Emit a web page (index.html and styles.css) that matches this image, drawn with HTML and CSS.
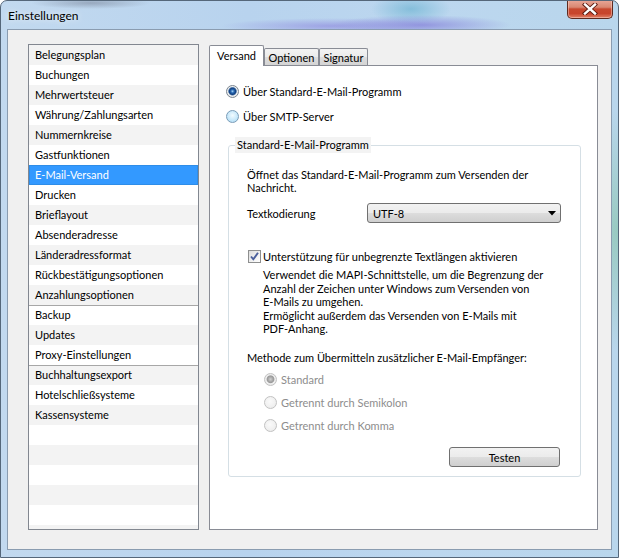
FILE: index.html
```html
<!DOCTYPE html>
<html lang="de">
<head>
<meta charset="utf-8">
<title>Einstellungen</title>
<link rel="stylesheet" href="styles.css">
</head>
<body>
<div class="window">
  <div class="titlebar">
    <span class="title">Einstellungen</span>
    <div class="close">
      <svg width="16" height="12" viewBox="0 0 16 12">
        <path d="M3 1.5 L13 10.5 M13 1.5 L3 10.5" stroke="#5a1a10" stroke-width="4.2" stroke-linecap="square" fill="none"/>
        <path d="M3 1.5 L13 10.5 M13 1.5 L3 10.5" stroke="#ffffff" stroke-width="2.4" stroke-linecap="square" fill="none"/>
      </svg>
    </div>
  </div>
  <div class="client">
    <ul class="list">
      <li>Belegungsplan</li>
      <li>Buchungen</li>
      <li>Mehrwertsteuer</li>
      <li>Währung/Zahlungsarten</li>
      <li>Nummernkreise</li>
      <li>Gastfunktionen</li>
      <li class="selected">E-Mail-Versand</li>
      <li>Drucken</li>
      <li>Brieflayout</li>
      <li>Absenderadresse</li>
      <li>Länderadressformat</li>
      <li>Rückbestätigungsoptionen</li>
      <li>Anzahlungsoptionen</li>
      <li class="sep">Backup</li>
      <li>Updates</li>
      <li>Proxy-Einstellungen</li>
      <li class="sep">Buchhaltungsexport</li>
      <li>Hotelschließsysteme</li>
      <li>Kassensysteme</li>
      <li></li>
      <li></li>
      <li></li>
      <li></li>
      <li></li>
      <li></li>
    </ul>
    <div class="tabarea">
      <div class="tabs">
        <div class="tab active tab-versand">Versand</div>
        <div class="tab tab-optionen">Optionen</div>
        <div class="tab tab-signatur">Signatur</div>
      </div>
      <div class="panel">
        <div class="option first">
          <span class="radio checked"></span>
          <span>Über Standard-E-Mail-Programm</span>
        </div>
        <div class="option second">
          <span class="radio hover"></span>
          <span>Über SMTP-Server</span>
        </div>
        <div class="group">
          <span class="group-label">Standard-E-Mail-Programm</span>
          <p class="desc1">Öffnet das Standard-E-Mail-Programm zum Versenden der<br>Nachricht.</p>
          <div class="field">
            <span class="field-label">Textkodierung</span>
            <div class="combo">
              <span>UTF-8</span>
              <svg width="8" height="5" viewBox="0 0 8 5"><path d="M0 0 H8 L4 4.5 Z" fill="#000"/></svg>
            </div>
          </div>
          <div class="check-row">
            <span class="checkbox">
              <svg width="11" height="11" viewBox="0 0 11 11"><path d="M2 5.5 L4.3 8.3 L9 1.8" stroke="#4a5f9c" stroke-width="1.9" fill="none"/></svg>
            </span>
            <span>Unterstützung für unbegrenzte Textlängen aktivieren</span>
          </div>
          <p class="desc2">Verwendet die MAPI-Schnittstelle, um die Begrenzung der<br>Anzahl der Zeichen unter Windows zum Versenden von<br>E-Mails zu umgehen.<br>Ermöglicht außerdem das Versenden von E-Mails mit<br>PDF-Anhang.</p>
          <p class="methode">Methode zum Übermitteln zusätzlicher E-Mail-Empfänger:</p>
          <div class="dis-option">
            <span class="radio disabled checked-dis"></span>
            <span>Standard</span>
          </div>
          <div class="dis-option">
            <span class="radio disabled"></span>
            <span>Getrennt durch Semikolon</span>
          </div>
          <div class="dis-option">
            <span class="radio disabled"></span>
            <span>Getrennt durch Komma</span>
          </div>
          <div class="button-row">
            <button class="btn">Testen</button>
          </div>
        </div>
      </div>
    </div>
  </div>
</div>
</body>
</html>
```

FILE: styles.css
```css
* { box-sizing: border-box; }

html, body {
  margin: 0;
  padding: 0;
  width: 619px;
  height: 558px;
  overflow: hidden;
  background: #ffffff;
  font-family: Lato, "Liberation Sans", sans-serif;
  font-size: 11px;
  color: #000;
}

.window {
  width: 619px;
  height: 558px;
  border: 1px solid #55677a;
  border-radius: 7px 7px 0 0;
  background:
    radial-gradient(ellipse 90px 10px at 420px 24px, rgba(140,140,220,0.85), rgba(140,140,220,0) 100%),
    radial-gradient(ellipse 110px 8px at 330px 25px, rgba(150,150,225,0.8), rgba(150,150,225,0) 100%),
    radial-gradient(ellipse 40px 16px at 410px 8px, rgba(110,180,210,0.7), rgba(110,180,210,0) 100%),
    radial-gradient(ellipse 60px 6px at 90px 2px, rgba(120,130,150,0.55), rgba(120,130,150,0) 100%),
    radial-gradient(ellipse 40px 120px at 616px 230px, rgba(120,190,150,0.5), rgba(120,190,150,0) 100%),
    linear-gradient(90deg, #c2d9ef 0%, #b8d3ee 40%, #bcd7ef 70%, #b9d6ec 100%);
  display: flex;
  flex-direction: column;
  overflow: hidden;
}

.titlebar {
  height: 28px;
  flex: none;
  display: flex;
  align-items: flex-start;
  justify-content: space-between;
  padding-left: 7px;
  padding-right: 5px;
}

.title {
  margin-top: 7px;
  font-size: 12px;
  color: #000;
  text-shadow: 0 0 6px rgba(255,255,255,0.9);
}

.close {
  width: 46px;
  height: 19px;
  margin-top: -1px;
  border: 1px solid #5e2a20;
  border-top: none;
  border-radius: 0 0 5px 5px;
  background: linear-gradient(#e9a899 0%, #d98772 40%, #c7482f 50%, #c8442c 75%, #e08066 100%);
  box-shadow: inset 0 0 0 1px rgba(255,220,210,0.45);
  display: flex;
  align-items: center;
  justify-content: center;
}

.client {
  flex: none;
  width: 605px;
  height: 521px;
  margin-left: 6px;
  border: 1px solid #8a9cb0;
  background: #f0f0f0;
  display: flex;
  padding: 14px 0 0 20px;
  gap: 10px;
}

/* List */
.list {
  list-style: none;
  margin: 0;
  padding: 0;
  width: 171px;
  height: 486px;
  border: 1px solid #828790;
  background: #fff;
  overflow: hidden;
}

.list li {
  height: 20px;
  line-height: 20px;
  padding-left: 6px;
  white-space: nowrap;
  background: #ffffff;
}

.list li:nth-child(odd) {
  background: #f3f3f3;
}

.list li.sep {
  box-shadow: inset 0 1px 0 #a7a7a7;
}

.list li.selected {
  background: #3399ff;
  color: #fff;
  box-shadow: inset 0 0 0 1px #2e8de8;
}

/* Tabs */
.tabarea {
  width: 389px;
  height: 486px;
  display: flex;
  flex-direction: column;
}

.tabs {
  height: 21px;
  flex: none;
  display: flex;
  align-items: flex-end;
}

.tab {
  height: 17px;
  border: 1px solid #898c95;
  border-bottom: none;
  border-radius: 2px 2px 0 0;
  background: linear-gradient(#f3f3f3 0%, #ebebeb 50%, #dddddd 51%, #d4d4d4 100%);
  text-align: center;
  line-height: 17px;
  white-space: nowrap;
}

.tab.active {
  height: 21px;
  margin-bottom: -1px;
  background: #ffffff;
  position: relative;
  z-index: 1;
  line-height: 19px;
}

.tab-versand { width: 55px; }
.tab-optionen { width: 55px; }
.tab-signatur { width: 49px; }

.panel {
  flex: 1;
  border: 1px solid #898c95;
  background: #ffffff;
  display: flex;
  flex-direction: column;
  align-items: flex-start;
}

.option {
  height: 16px;
  display: flex;
  align-items: center;
  gap: 4px;
  margin-left: 16px;
}

.option.first { margin-top: 17px; }
.option.second { margin-top: 9px; }

.radio {
  width: 13px;
  height: 13px;
  flex: none;
  border-radius: 50%;
  border: 1px solid #8a8b8c;
  background: radial-gradient(circle at 45% 40%, #ffffff 0%, #f0f0f0 45%, #d8d8d8 100%);
}

.radio.checked {
  border-color: #7a8590;
  background: radial-gradient(circle at 50% 48%, #a6d4f5 0px, #2a6bb5 1.6px, #123f80 3.2px, #6a8fb8 4px, #f2f2f2 4.6px, #e4e4e4 6px);
}

.radio.hover {
  border-color: #7b9cb7;
  background: radial-gradient(circle at 50% 40%, #f2fbff 0%, #c8e8fa 55%, #a9d8f3 100%);
}

.radio.disabled {
  border-color: #c2c2c2;
  background: radial-gradient(circle at 45% 40%, #fafafa 0%, #f0f0f0 60%, #e6e6e6 100%);
}

.radio.checked-dis {
  background: radial-gradient(circle at 50% 48%, #d0d0d0 0px, #a3a3a3 2.6px, #9a9a9a 3.4px, #f1f1f1 4.4px, #e6e6e6 6px);
}

/* Group box */
.group {
  position: relative;
  margin: 21px 0 0 18px;
  width: 353px;
  height: 332px;
  border: 1px solid #d5dfe5;
  border-radius: 3px;
  padding: 22px 0 0 18px;
  display: flex;
  flex-direction: column;
  align-items: flex-start;
}

.group-label {
  position: absolute;
  top: -9px;
  left: 6px;
  padding: 0 2px;
  line-height: 16px;
  background: #f3f3f3;
  white-space: nowrap;
}

.desc1 {
  margin: 0;
  line-height: 13px;
  white-space: nowrap;
}

.field {
  margin-top: 9px;
  display: flex;
  align-items: center;
  height: 20px;
}

.field-label {
  width: 120px;
}

.combo {
  width: 194px;
  height: 20px;
  border: 1px solid #707070;
  border-radius: 3px;
  background: linear-gradient(#f2f2f2 0%, #ebebeb 50%, #dddddd 51%, #cfcfcf 100%);
  display: flex;
  align-items: center;
  justify-content: space-between;
  padding: 0 4px 0 5px;
}

.check-row {
  margin-top: 25px;
  margin-left: 1px;
  height: 16px;
  display: flex;
  align-items: center;
  gap: 2px;
}

.checkbox {
  width: 13px;
  height: 13px;
  flex: none;
  border: 1px solid #8e8f8f;
  background: linear-gradient(135deg, #dcdcdc 0%, #f2f2f2 60%, #ffffff 100%);
  display: flex;
  align-items: center;
  justify-content: center;
}

.desc2 {
  margin: 4px 0 0 16px;
  line-height: 13.6px;
  white-space: nowrap;
}

.methode {
  margin: 15px 0 0 0;
  line-height: 13px;
  white-space: nowrap;
}

.dis-option {
  height: 16px;
  margin-left: 17px;
  margin-top: 6.6px;
  display: flex;
  align-items: center;
  gap: 4px;
  color: #8d8d8d;
}

.methode + .dis-option { margin-top: 8px; }

.button-row {
  align-self: stretch;
  display: flex;
  justify-content: flex-end;
  padding-right: 20px;
  margin-top: 14px;
}

.btn {
  width: 111px;
  height: 20px;
  font-family: inherit;
  font-size: 11px;
  color: #000;
  border: 1px solid #707070;
  border-radius: 3px;
  background: linear-gradient(#f2f2f2 0%, #ebebeb 50%, #dddddd 51%, #cfcfcf 100%);
  padding: 0;
  line-height: 17px;
}
```
